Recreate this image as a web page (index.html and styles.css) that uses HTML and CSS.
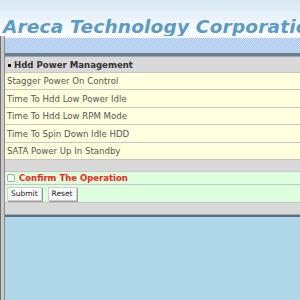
FILE: index.html
```html
<!DOCTYPE html>
<html>
<head>
<meta charset="utf-8">
<link rel="stylesheet" href="styles.css">
</head>
<body>
<div class="header">
  <div class="title">Areca Technology Corporation</div>
</div>
<div class="frame">
  <div class="band"></div>
  <div class="bar"></div>
  <div class="content">
    <div class="row head"><span class="bullet"></span>Hdd Power Management</div>
    <div class="row item">Stagger Power On Control</div>
    <div class="row item tall">Time To Hdd Low Power Idle</div>
    <div class="row item">Time To Hdd Low RPM Mode</div>
    <div class="row item tall">Time To Spin Down Idle HDD</div>
    <div class="row item">SATA Power Up In Standby</div>
    <div class="row spacer"></div>
    <div class="row green confirm"><span class="check"></span><span class="confirm-text">Confirm The Operation</span></div>
    <div class="row green buttons"><span class="btn">Submit</span><span class="btn">Reset</span></div>
    <div class="foot"></div>
  </div>
  <div class="bottom-bar"></div>
</div>
</body>
</html>
```
FILE: styles.css
```css
html, body { margin: 0; padding: 0; }
body {
  background: #b0d6ea;
  font-family: "DejaVu Sans", Verdana, sans-serif;
  overflow: hidden;
  height: 300px;
}
.header {
  height: 36px;
  background: linear-gradient(to bottom, #d6e7f6 0%, #eaf3fb 50%, #ffffff 100%);
  overflow: hidden;
  white-space: nowrap;
}
.title {
  padding: 17px 0 0 3px;
  font-size: 18.5px;
  font-weight: bold;
  font-style: italic;
  color: #5b9bc9;
  line-height: 20px;
  letter-spacing: 0.2px;
}
.frame {
  border-left: 1px solid #6f6f6f;
  box-shadow: inset 3px 0 0 #c9c9c9, inset 4px 0 0 #8a8a8a;
  padding-left: 4px;
  background: #b0d6ea;
  height: 264px;
}
.band {
  height: 15px;
  border-top: 2px solid #f2f6fb;
  background-color: #abc9ef;
  background-image:
    linear-gradient(45deg, #c8dcf7 25%, transparent 25%, transparent 75%, #c8dcf7 75%),
    linear-gradient(45deg, #c8dcf7 25%, transparent 25%, transparent 75%, #c8dcf7 75%);
  background-size: 2px 2px;
  background-position: 0 0, 1px 1px;
}
.bar {
  height: 3px;
  background: #6c7d8c;
  border-bottom: 1px solid #9aa6b0;
}
.content {
  background: #d9d9d9;
}
.row {
  height: 16px;
  border-top: 1px solid #c6c6c6;
  display: flex;
  align-items: center;
  font-size: 8.6px;
  color: #555555;
  padding-left: 2px;
}
.tall { height: 17px; }
.head {
  height: 15px;
  border-top: none;
  background: #d9d9d9;
  font-weight: bold;
  color: #333333;
  padding-left: 3px;
}
.bullet {
  width: 3px;
  height: 3px;
  background: #111;
  margin-right: 3px;
  margin-top: 2px;
}
.item { background: #ffffdd; }
.spacer {
  height: 11px;
  background: #d9d9d9;
  border-bottom: 1px solid #c6c6c6;
}
.green { background: #ddffdd; }
.confirm {
  height: 12px;
  border-top: none;
}
.check {
  width: 6px;
  height: 6px;
  border: 1px solid #aaa;
  border-radius: 2px;
  background: #fafafa;
  margin-right: 4px;
}
.confirm-text {
  color: #ff1a1a;
  font-weight: bold;
  font-size: 8.5px;
}
.buttons {
  height: 17px;
  gap: 6px;
}
.btn {
  display: inline-flex;
  align-items: center;
  justify-content: center;
  height: 12px;
  padding: 0 3px;
  background: #fdfdfd;
  border: 1px solid #cfcfcf;
  box-shadow: 1px 1px 0 #9b9b9b;
  color: #222;
  font-size: 7.5px;
}
.foot {
  height: 11px;
  background: #d9d9d9;
  border-top: 1px solid #c6c6c6;
}
.bottom-bar {
  height: 2px;
  background: #5d6e7c;
  border-top: 1px solid #a2acb5;
}
```
